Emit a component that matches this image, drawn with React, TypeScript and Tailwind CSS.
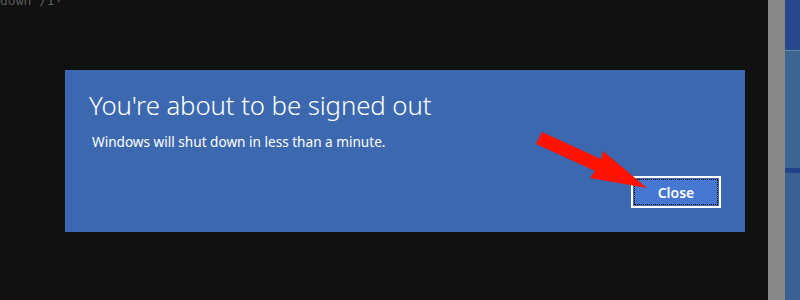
export default function App() {
  return (
    <div className="flex h-[300px] w-[800px] overflow-hidden bg-[#111111] font-['Noto_Sans',sans-serif]">
      {/* dark backdrop with the dialog */}
      <div className="relative w-[768px] shrink-0 pt-[70px] pl-[65px]">
        <span className="absolute left-0 top-[-9px] font-['DejaVu_Sans_Mono',monospace] text-[13px] text-[#5a5a5a]">
          down /I·
        </span>

        <div className="relative flex h-[162px] w-[680px] flex-col bg-[#3c68b0] pl-6 pt-[18px] text-white">
          <h1 className="text-[25.8px] font-light leading-[34px] tracking-[-0.1px]">You're about to be signed out</h1>
          <p className="mt-[10px] pl-[3px] text-[13.6px] leading-[20px]">Windows will shut down in less than a minute.</p>

          <div className="mt-auto mb-[24px] mr-[24px] flex justify-end">
            <button className="border-2 border-white p-px">
              <span className="flex h-[26px] w-[84px] items-center justify-center border border-dotted border-black bg-[#4677d1] text-[14px] font-semibold">
                Close
              </span>
            </button>
          </div>

          {/* red annotation arrow */}
          <svg className="absolute left-0 top-0" width="680" height="162" viewBox="65 70 680 162">
            <polygon
              points="542,132 601,159 603,151 647,188 590,178 595,171 536,144"
              fill="#ff1200"
            />
          </svg>
        </div>
      </div>

      {/* window edge */}
      <div className="w-[17px] shrink-0 bg-[#888888]" />

      {/* desktop peek */}
      <div className="flex flex-1 flex-col">
        <div className="h-[50px] bg-[#27468c]" />
        <div className="h-px bg-[#5c8aa4]" />
        <div className="h-[117px] bg-[#3d6591]" />
        <div className="h-[5px] bg-[#24428a]" />
        <div className="flex-1 bg-[#3a5f92]" />
      </div>
    </div>
  );
}
